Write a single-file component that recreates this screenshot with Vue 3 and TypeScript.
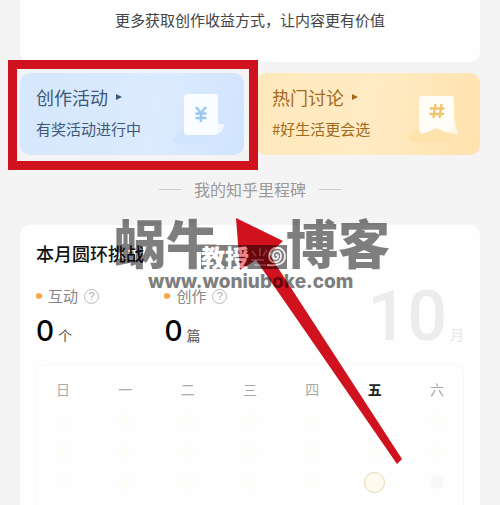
<script setup lang="ts">
interface Stat {
  label: string
  value: number
  unit: string
}

const stats: Stat[] = [
  { label: '互动', value: 0, unit: '个' },
  { label: '创作', value: 0, unit: '篇' },
]

const weekdays: string[] = ['日', '一', '二', '三', '四', '五', '六']
const today = 5
const weeks: number[] = [0, 1, 2]

function dayClass(week: number, day: number): string {
  if (week === 2 && day === today) return 'ring current'
  if (week === 2 && day > today) return 'ring upcoming'
  return 'ring'
}
</script>

<template>
  <main class="page">
    <section class="card intro">
      <p>更多获取创作收益方式，让内容更有价值</p>
    </section>

    <nav class="entries">
      <a class="entry blue" href="#activity">
        <span class="entry-text">
          <strong>创作活动
            <svg class="caret" viewBox="0 0 6 8" aria-hidden="true"><path d="M0 1 6 4 0 7Z" fill="currentColor" /></svg>
          </strong>
          <span class="sub">有奖活动进行中</span>
        </span>
        <svg class="art" viewBox="0 0 56 60" aria-hidden="true">
          <defs>
            <linearGradient id="blueBeam" x1="1" y1="0" x2="0" y2="1">
              <stop offset="0" stop-color="#c6dffb" stop-opacity="0" />
              <stop offset="1" stop-color="#c3dcf9" stop-opacity=".5" />
            </linearGradient>
          </defs>
          <path d="M0 56 16 38H52L34 60H6Z" fill="url(#blueBeam)" />
          <path d="M44 40H52Q52 50 42 50H30Z" fill="#eff6ff" />
          <rect x="12" y="10" width="34" height="41" rx="4" fill="#fafdff" />
          <path d="M24 23 29 29 34 23M29 29V38M23.500 29.500H34.500M23.500 34H34.500" fill="none" stroke="#9bc8f2" stroke-width="2.600" />
        </svg>
      </a>
      <a class="entry gold" href="#discussion">
        <span class="entry-text">
          <strong>热门讨论
            <svg class="caret" viewBox="0 0 6 8" aria-hidden="true"><path d="M0 1 6 4 0 7Z" fill="currentColor" /></svg>
          </strong>
          <span class="sub">#好生活更会选</span>
        </span>
        <svg class="art" viewBox="0 0 56 60" aria-hidden="true">
          <defs>
            <linearGradient id="goldBeam" x1="1" y1="0" x2="0" y2="1">
              <stop offset="0" stop-color="#ffdf9f" stop-opacity=".1" />
              <stop offset="1" stop-color="#fdda98" stop-opacity=".6" />
            </linearGradient>
          </defs>
          <path d="M0 52 14 42H52L42 58H4Z" fill="url(#goldBeam)" />
          <path d="M42 30Q47 32 47 38L50 50Q40 50 35 46Z" fill="#fff6e2" />
          <path d="M14 12H43Q46 12 46 15V43Q46 47 42 47L36 48Q29 42 24 46L14 50Q11 48 11 44V15Q11 12 14 12Z" fill="#fffdf8" />
          <path d="M27.500 20 25.500 34M33.500 20 31.500 34M22 24.500H36.500M21.500 30H36" fill="none" stroke="#efc56d" stroke-width="2.400" />
        </svg>
      </a>
    </nav>

    <h2 class="milestone">我的知乎里程碑</h2>

    <section class="card challenge">
      <h3>本月圆环挑战</h3>
      <div class="summary">
        <div v-for="s in stats" :key="s.label" class="stat">
          <div class="stat-label">
            <i class="dot"></i>{{ s.label }}
            <button class="help" type="button" :aria-label="s.label">?</button>
          </div>
          <div class="stat-value"><b>{{ s.value }}</b>{{ s.unit }}</div>
        </div>
        <div class="month"><b>10</b>月</div>
      </div>

      <table class="calendar">
        <thead>
          <tr>
            <th v-for="(d, i) in weekdays" :key="d" :class="{ today: i === today }" scope="col">{{ d }}</th>
          </tr>
        </thead>
        <tbody>
          <tr v-for="w in weeks" :key="w">
            <td v-for="(d, i) in weekdays" :key="d"><i :class="dayClass(w, i)"></i></td>
          </tr>
        </tbody>
      </table>
    </section>

    <div class="highlight" aria-hidden="true"></div>
    <svg class="arrow" viewBox="0 0 168 246" aria-hidden="true">
      <path d="M1 0 48 23 34 36 167 241 162 246 21 42 5 52Z" fill="#d0121f" />
    </svg>

    <div class="watermark">
      <div class="brand">
        <span>蜗牛</span>
        <div class="badge">
          <span>教授</span>
          <svg viewBox="0 0 38 24" aria-hidden="true">
            <path d="M3 6 7 11M11 3V11M18 5 14 11M2 15H15M5 20H17" stroke="#fff" stroke-opacity=".3" stroke-width="2" fill="none" />
            <path d="M18 20Q36 22 36 11C36 0 20 0 20 11C20 20 32 19 32 11C32 4 24 5 24 11C24 15 29 15 29 11Q28 9 27 11" stroke="#e8e8e8" stroke-width="1.800" fill="none" />
          </svg>
        </div>
        <span>博客</span>
      </div>
      <div class="site">www.woniuboke.com</div>
    </div>
  </main>
</template>

<style>
body {
  margin: 0;
  background: #f4f4f4;
}
</style>

<style scoped>
.page {
  position: relative;
  box-sizing: border-box;
  min-height: 100vh;
  display: flex;
  flex-direction: column;
  padding: 0 20px;
  overflow: hidden;
  color: #111;
  font-family: "Noto Sans CJK SC", sans-serif;
}
p, h2, h3 {
  margin: 0;
}
.card {
  background: #fefefe;
}
.intro {
  padding: 8px 0 30px;
  border-radius: 0 0 10px 10px;
  text-align: center;
  font-size: 15px;
  line-height: 24px;
  color: #444;
}
.entries {
  display: grid;
  grid-template-columns: 1fr 1fr;
  gap: 12px;
  margin-top: 11px;
}
.entry {
  display: flex;
  justify-content: space-between;
  align-items: center;
  height: 82px;
  box-sizing: border-box;
  padding: 0 16px;
  border-radius: 10px;
  text-decoration: none;
}
.blue {
  background: linear-gradient(100deg, #d5e7fc, #dcebff 60%, #d0e4fd);
  color: #3d5878;
}
.gold {
  background: linear-gradient(100deg, #ffe8bc, #ffebc4 50%, #ffe3ae);
  color: #a26a1c;
}
.entry-text {
  display: flex;
  flex-direction: column;
  gap: 6px;
  padding-bottom: 4px;
  white-space: nowrap;
}
.entry strong {
  display: flex;
  align-items: center;
  gap: 8px;
  font-size: 18px;
  line-height: 28px;
  font-weight: 400;
}
.sub {
  font-size: 15px;
  line-height: 24px;
}
.caret {
  width: 6px;
  height: 8px;
}
.art {
  flex: none;
  width: 56px;
  height: 60px;
}
.milestone {
  display: flex;
  justify-content: center;
  align-items: center;
  gap: 13px;
  padding: 22px 0 24px;
  font-size: 16px;
  line-height: 24px;
  font-weight: 400;
  color: #999;
}
.milestone::before,
.milestone::after {
  content: "";
  width: 22px;
  height: 1px;
  background: #ccc;
}
.challenge {
  flex: 1;
  padding: 14px 16px 0;
  border-radius: 10px 10px 0 0;
}
h3 {
  font-size: 18px;
  line-height: 28px;
  font-weight: 500;
}
.summary {
  display: grid;
  grid-template-columns: 3fr 3fr 4fr;
  margin-top: 17px;
}
.stat-label {
  display: flex;
  align-items: center;
  font-size: 15px;
  line-height: 24px;
  color: #888;
}
.dot {
  width: 6px;
  height: 6px;
  margin-right: 6px;
  border-radius: 50%;
  background: #f6a945;
}
.help {
  width: 15px;
  height: 15px;
  margin-left: 6px;
  padding: 0;
  border: 1px solid #bbb;
  border-radius: 50%;
  background: none;
  color: #aaa;
  font: 11px/13px "Liberation Sans", sans-serif;
}
.stat-value {
  display: flex;
  align-items: baseline;
  gap: 4px;
  margin-top: 5px;
  font-size: 14px;
  line-height: 36px;
  color: #555;
}
.stat-value b {
  font: 500 28px/36px Inter, sans-serif;
  color: #000;
}
.month {
  display: flex;
  justify-content: flex-end;
  align-items: baseline;
  gap: 3px;
  height: 60px;
  margin-top: -4px;
  font-size: 14px;
  color: #e6e6e6;
}
.month b {
  font: 500 70px/72px Roboto, sans-serif;
  color: #ececec;
}
.calendar {
  display: block;
  margin-top: 11px;
  padding: 10px 11px 20px;
  border: 1px solid #f8f8f8;
  border-bottom: 0;
  border-radius: 10px 10px 0 0;
}
.calendar thead,
.calendar tbody {
  display: block;
}
.calendar tr {
  display: flex;
  justify-content: space-between;
}
.calendar th {
  width: 30px;
  padding: 0;
  font-size: 14px;
  line-height: 28px;
  font-weight: 400;
  color: #aaa;
}
.calendar th.today {
  font-weight: 700;
  color: #222;
}
.calendar tbody {
  padding-top: 4px;
}
.calendar td {
  display: flex;
  justify-content: center;
  align-items: center;
  width: 30px;
  height: 30px;
  padding: 0;
}
.ring {
  box-sizing: border-box;
  width: 14px;
  height: 14px;
  border-radius: 50%;
  background: #fdfdfa;
}
.ring.current {
  width: 21px;
  height: 21px;
  border: 1px solid #e6d7ac;
  background: #fffaf0;
}
.ring.upcoming {
  background: #f8f8f8;
}
.highlight {
  position: absolute;
  top: 60px;
  left: 8px;
  width: 250px;
  height: 110px;
  box-sizing: border-box;
  border: 9px solid #d0121f;
}
.arrow {
  position: absolute;
  top: 218px;
  left: 235px;
  width: 168px;
  height: 246px;
}
.watermark {
  position: absolute;
  top: 212px;
  left: 114px;
  color: #000;
  opacity: .5;
  white-space: nowrap;
  pointer-events: none;
}
.brand {
  display: flex;
  align-items: flex-end;
  font-size: 52px;
  line-height: 60px;
  font-weight: 900;
}
.badge {
  display: flex;
  align-items: center;
  height: 24px;
  margin: 0 -1px 3px -17px;
  background: #000;
  color: #fff;
  font-size: 24px;
  line-height: 24px;
}
.badge svg {
  width: 38px;
  height: 24px;
}
.site {
  padding-left: 34px;
  font: 800 19px/20px Inter, sans-serif;
}
</style>
